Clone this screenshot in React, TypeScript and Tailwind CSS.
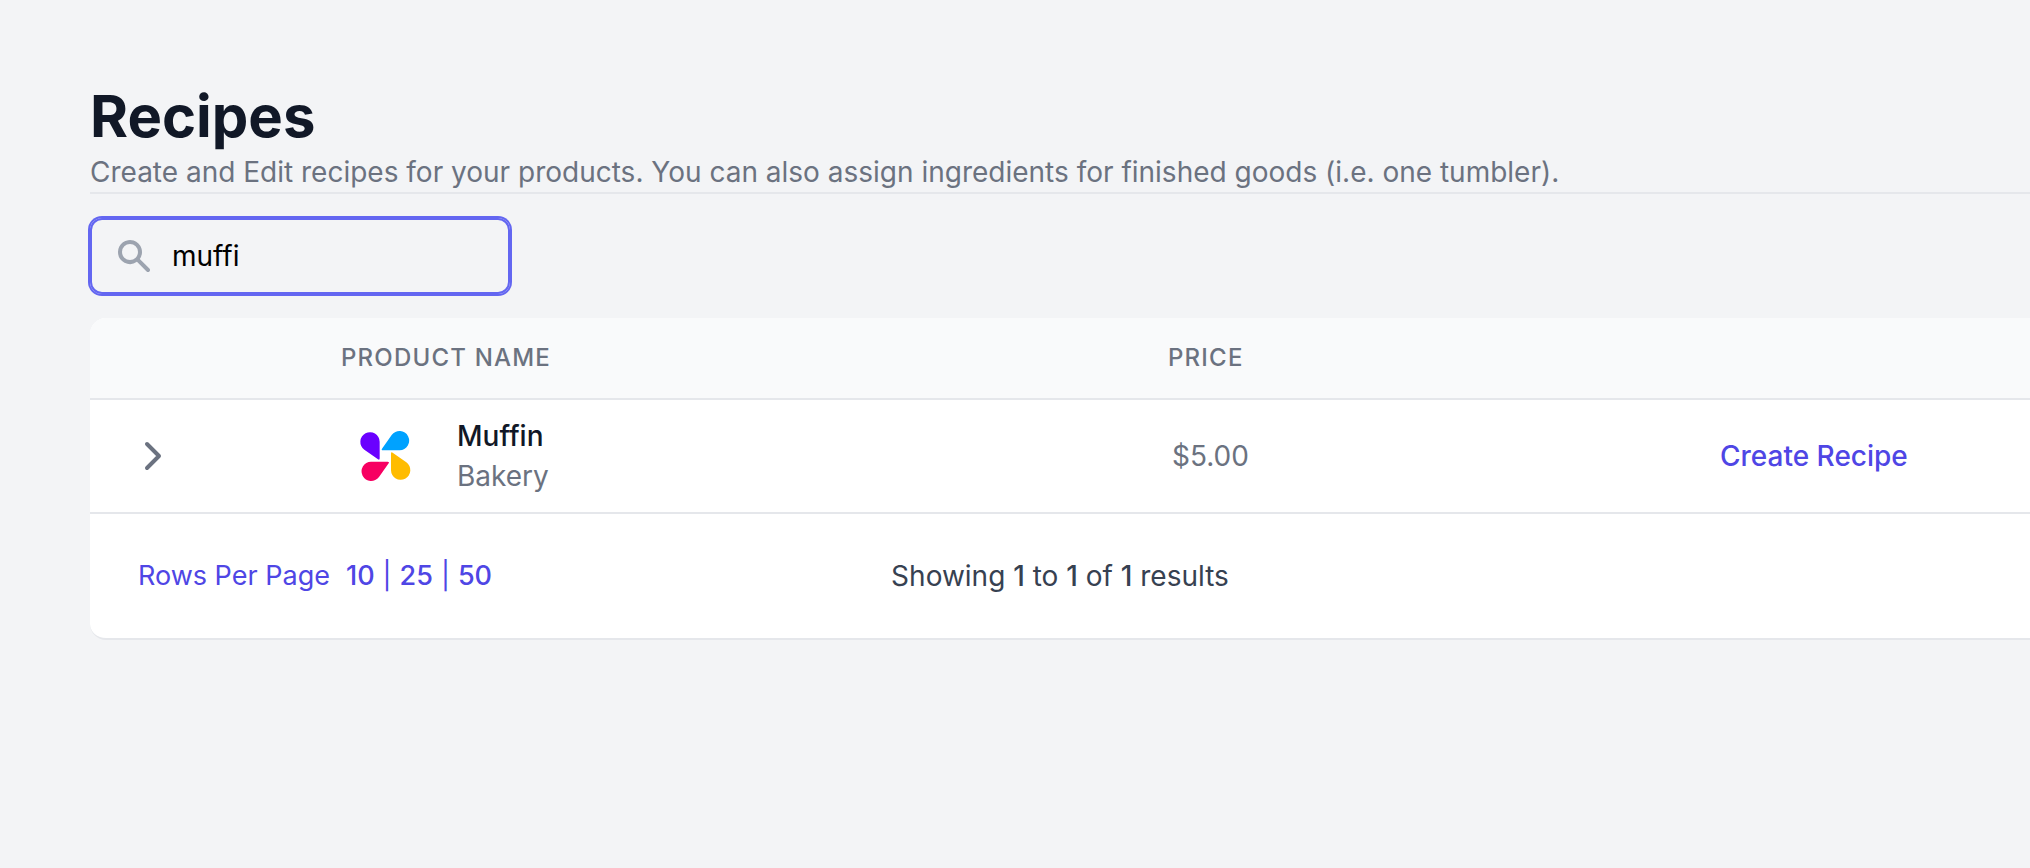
import { useState } from 'react';

const products = [{ id: 1, name: 'Muffin', category: 'Bakery', price: '$5.00' }];
const pageSizes = [10, 25, 50];
const petals = [
	{ color: '#6a00ff', angle: 0 },
	{ color: '#00a2ff', angle: 90 },
	{ color: '#ffbc00', angle: 180 },
	{ color: '#f70061', angle: 270 },
];

const SearchIcon = () => (
	<svg className="h-10 w-10" viewBox="0 0 20 20" fill="currentColor" role="img" aria-label="Search recipes">
		<path
			fillRule="evenodd"
			clipRule="evenodd"
			d="M8 4a4 4 0 100 8 4 4 0 000-8zM2 8a6 6 0 1110.89 3.476l4.817 4.817a1 1 0 01-1.414 1.414l-4.816-4.816A6 6 0 012 8z"
		/>
	</svg>
);

const ChevronIcon = () => (
	<svg
		className="h-10 w-10"
		viewBox="0 0 40 40"
		fill="none"
		stroke="currentColor"
		strokeWidth="4"
		strokeLinecap="round"
		strokeLinejoin="round"
		aria-hidden="true"
	>
		<path d="M13 8l12 12-12 12" />
	</svg>
);

const ProductLogo = () => (
	<svg className="h-20 w-20 shrink-0" viewBox="0 0 240 240" aria-hidden="true">
		{petals.map(({ color, angle }) => (
			<path
				key={angle}
				fill={color}
				transform={`rotate(${angle} 121 120)`}
				d="M104 77V127Q104 133 99 130L58 101A29 29 0 1 1 104 77Z"
			/>
		))}
	</svg>
);

const ProductTable = () => (
	<table className="w-full table-fixed text-left">
		<colgroup>
			<col className="w-[203px]" />
			<col />
			<col className="w-[548px]" />
			<col className="w-[362px]" />
		</colgroup>
		<thead className="bg-[#f9fafb] text-[24px] leading-8 tracking-wider text-[#6b7280] uppercase">
			<tr className="border-b-2 border-[#e5e7eb]">
				<td />
				<th scope="col" className="px-12 py-6 font-medium">
					Product Name
				</th>
				<th scope="col" className="px-12 py-6 font-medium">
					Price
				</th>
				<td />
			</tr>
		</thead>
		<tbody className="text-[28px] leading-10 text-[#6b7280]">
			{products.map((product) => (
				<tr key={product.id} className="border-b-2 border-[#e5e7eb]">
					<td className="px-11">
						<button type="button" className="block" aria-label={`Expand ${product.name}`}>
							<ChevronIcon />
						</button>
					</td>
					<td className="px-13 py-4">
						<div className="flex items-center gap-8">
							<ProductLogo />
							<div>
								<div className="font-medium text-[#111827]">{product.name}</div>
								<div>{product.category}</div>
							</div>
						</div>
					</td>
					<td className="px-13">{product.price}</td>
					<td className="px-13">
						<a href="#create" className="font-medium whitespace-nowrap text-[#4f46e5]">
							Create Recipe
						</a>
					</td>
				</tr>
			))}
		</tbody>
	</table>
);

const Pagination = () => (
	<nav
		className="grid grid-cols-[1fr_auto_1fr] items-center px-12 py-[42px] text-[28px] leading-10"
		aria-label="Pagination"
	>
		<div className="flex gap-4 text-[27px] text-[#4f46e5]">
			<span>Rows Per Page</span>
			<span className="flex gap-2">
				{pageSizes.map((size, idx) => (
					<span key={size} className="flex gap-2">
						{idx > 0 && <span>|</span>}
						<button type="button" className="font-medium">
							{size}
						</button>
					</span>
				))}
			</span>
		</div>
		<p className="text-[#374151]">
			Showing <span className="font-medium">1</span> to <span className="font-medium">1</span> of{' '}
			<span className="font-medium">1</span> results
		</p>
	</nav>
);

const App = () => {
	const [search, setSearch] = useState<string>('muffi');

	return (
		<main className="min-h-screen bg-[#f3f4f6] pt-20 pb-20 pl-[90px] font-['Inter',sans-serif]">
			<header className="border-b-2 border-[#e5e7eb]">
				<h1 className="text-[58px] leading-[72px] font-bold text-[#111827]">Recipes</h1>
				<p className="text-[28px] leading-10 text-[#6b7280]">
					Create and Edit recipes for your products. You can also assign ingredients for finished goods (i.e. one
					tumbler).
				</p>
			</header>

			<div className="relative my-6 w-[420px]">
				<label htmlFor="search" className="absolute inset-y-0 left-6 flex items-center text-[#9ca3af]">
					<SearchIcon />
				</label>
				<input
					id="search"
					type="text"
					value={search}
					onChange={(e) => setSearch(e.target.value)}
					className="block h-[76px] w-full rounded-xl border-2 border-[#6366f1] bg-transparent pr-6 pl-20 text-[28px] leading-10 text-black ring-2 ring-[#6366f1] outline-none"
				/>
			</div>

			<section className="overflow-hidden rounded-l-2xl border-b-2 border-[#e5e7eb] bg-white">
				<ProductTable />
				<Pagination />
			</section>
		</main>
	);
};

export default App;
